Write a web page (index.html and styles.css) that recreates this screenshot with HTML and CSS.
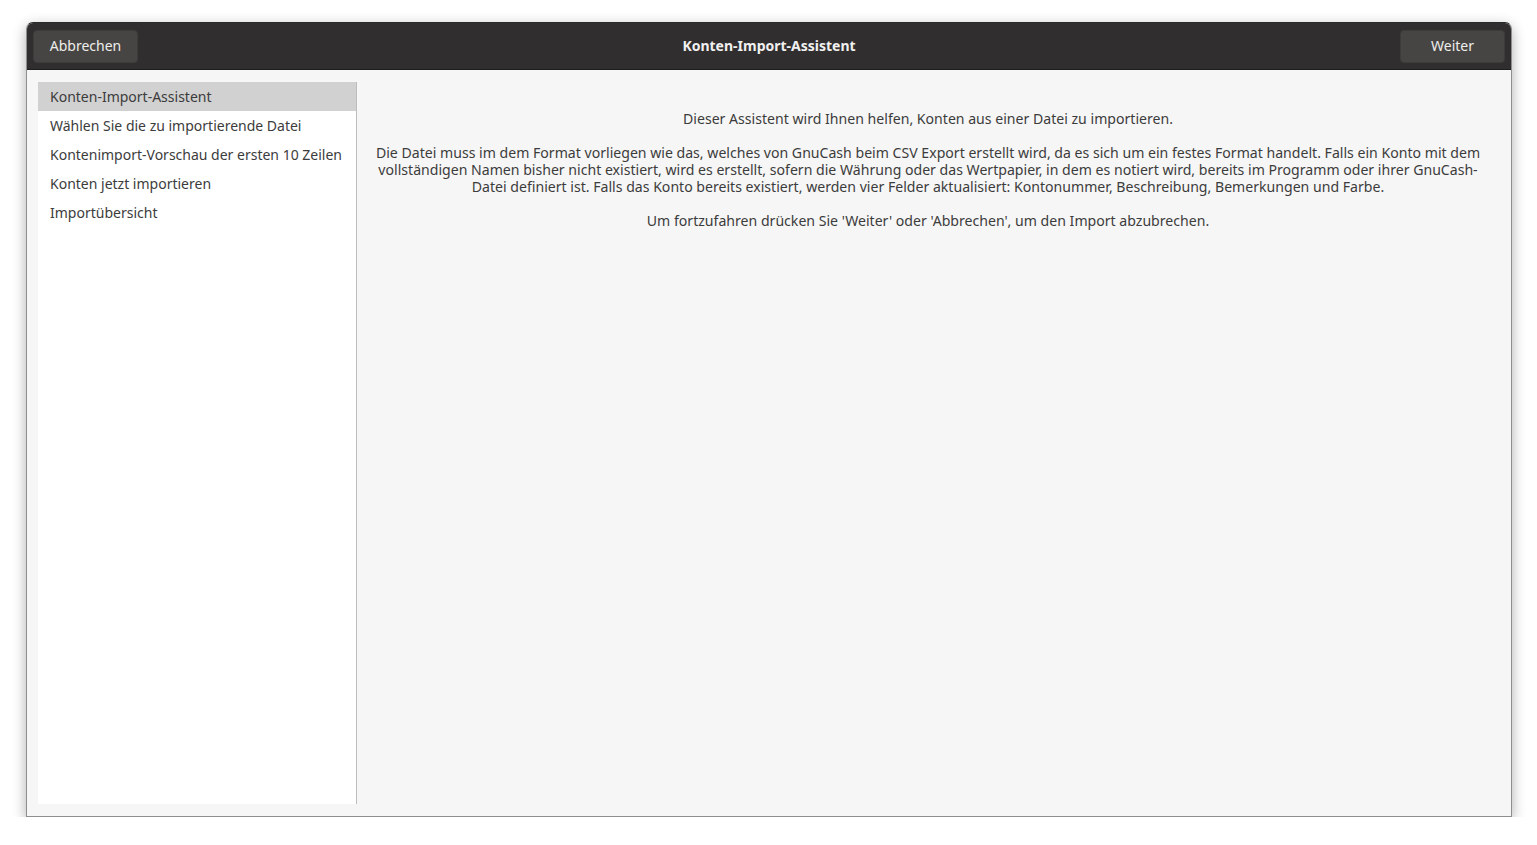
FILE: index.html
```html
<!DOCTYPE html>
<html lang="de">
<head>
<meta charset="utf-8">
<title>Konten-Import-Assistent</title>
<link rel="stylesheet" href="styles.css">
</head>
<body>
<div class="window">
  <header class="headerbar">
    <button class="btn">Abbrechen</button>
    <div class="title">Konten-Import-Assistent</div>
    <button class="btn">Weiter</button>
  </header>
  <div class="body">
    <nav class="sidebar">
      <div class="step active">Konten-Import-Assistent</div>
      <div class="step">Wählen Sie die zu importierende Datei</div>
      <div class="step">Kontenimport-Vorschau der ersten 10 Zeilen</div>
      <div class="step">Konten jetzt importieren</div>
      <div class="step">Importübersicht</div>
    </nav>
    <main class="content">
      <p class="para">Dieser Assistent wird Ihnen helfen, Konten aus einer Datei zu importieren.</p>
      <p class="para">Die Datei muss im dem Format vorliegen wie das, welches von GnuCash beim CSV Export erstellt wird, da es sich um ein festes Format handelt. Falls ein Konto mit dem<br>vollständigen Namen bisher nicht existiert, wird es erstellt, sofern die Währung oder das Wertpapier, in dem es notiert wird, bereits im Programm oder ihrer GnuCash-<br>Datei definiert ist. Falls das Konto bereits existiert, werden vier Felder aktualisiert: Kontonummer, Beschreibung, Bemerkungen und Farbe.</p>
      <p class="para">Um fortzufahren drücken Sie 'Weiter' oder 'Abbrechen', um den Import abzubrechen.</p>
    </main>
  </div>
</div>
</body>
</html>
```

FILE: styles.css
```css
html, body {
  margin: 0;
  padding: 0;
  background: #ffffff;
}

body {
  font-family: "Noto Sans", "Open Sans", sans-serif;
  font-size: 14px;
  color: #3c3c3c;
}

.window {
  margin: 22px 0 0 26px;
  width: 1486px;
  height: 795px;
  box-sizing: border-box;
  border: 1px solid #8e8e8e;
  border-top-color: #2a2a2a;
  border-radius: 7px 7px 0 0;
  background: #f6f6f6;
  box-shadow: 0 4px 14px rgba(0, 0, 0, 0.32);
  display: flex;
  flex-direction: column;
  overflow: hidden;
}

.headerbar {
  flex: 0 0 auto;
  height: 47px;
  box-sizing: border-box;
  background: #302e2e;
  border-bottom: 1px solid #1e1e1e;
  display: flex;
  align-items: center;
  justify-content: space-between;
  padding: 0 6px;
}

.btn {
  width: 105px;
  height: 33px;
  border: 1px solid #3e3c3b;
  border-radius: 4px;
  background: #474543;
  color: #eeeeec;
  font-family: inherit;
  font-size: 14px;
  padding: 0 0 2px 0;
}

.title {
  color: #f0f0f0;
  font-weight: bold;
  font-size: 14px;
  padding-bottom: 2px;
}

.body {
  flex: 1 1 auto;
  display: flex;
  padding: 12px 0 12px 11px;
  min-height: 0;
}

.sidebar {
  width: 318px;
  background: #ffffff;
  border-right: 1px solid #bdbdbd;
  display: flex;
  flex-direction: column;
}

.step {
  height: 29px;
  line-height: 29px;
  padding-left: 12px;
  white-space: nowrap;
  color: #3c3c3c;
}

.step.active {
  background: #d1d1d1;
}

.content {
  flex: 1 1 auto;
  padding: 28px 12px 0 0;
  text-align: center;
  line-height: 17px;
  white-space: nowrap;
  font-size: 14.1px;
}

.para {
  margin: 0 0 17px 0;
}
```
